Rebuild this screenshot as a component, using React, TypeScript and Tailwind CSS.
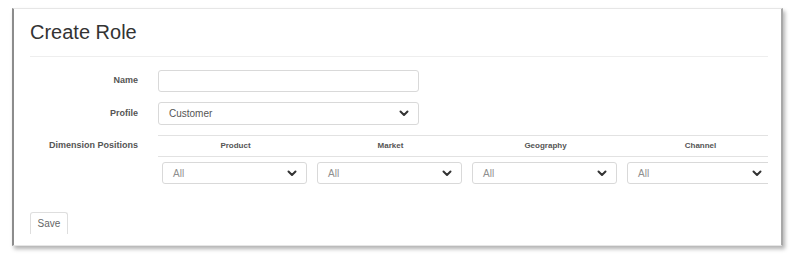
import React from 'react'

const font = "font-['Liberation_Sans',Arial,sans-serif]"

function Chevron() {
  return (
    <svg width="10" height="7" viewBox="0 0 10 7" className="shrink-0">
      <polyline points="1.5,1.5 5,5 8.5,1.5" fill="none" stroke="#333" strokeWidth="2" strokeLinecap="round" strokeLinejoin="round" />
    </svg>
  )
}

function SelectBox({ value, width, muted }: { value: string; width: string; muted?: boolean }) {
  return (
    <div
      className={`${width} h-[22px] flex items-center justify-between pl-[10px] pr-[9px] border border-[#d9d9d9] rounded-[3px] bg-white`}
    >
      <span className={`text-[10px] ${muted ? 'text-[#8f8f8f]' : 'text-[#555]'}`}>{value}</span>
      <Chevron />
    </div>
  )
}

const columns = ['Product', 'Market', 'Geography', 'Channel']

export default function App() {
  return (
    <div className={`w-[793px] h-[262px] bg-white pt-[8px] pl-[12px] ${font}`}>
      <div className="w-[771px] h-[238px] bg-white border border-[#e6e6e6] border-l-2 border-l-[#8c8c8c] border-r-2 border-r-[#a8a8a8] shadow-[2px_3px_4px_rgba(0,0,0,0.3)] pl-[16px] pr-[13px] pt-[11px] overflow-hidden">
        <h1 className="text-[20px] leading-[24px] text-[#333]">Create Role</h1>
        <div className="mt-[12px] border-t border-[#eeeeee]" />

        <div className="mt-[13px] flex items-center gap-[20px]">
          <label className="w-[108px] text-right text-[9px] font-bold text-[#555]">Name</label>
          <div className="w-[261px] h-[22px] border border-[#d9d9d9] rounded-[3px]" />
        </div>

        <div className="mt-[10px] flex items-center gap-[20px]">
          <label className="w-[108px] text-right text-[9px] font-bold text-[#555]">Profile</label>
          <SelectBox value="Customer" width="w-[261px] !h-[23px]" />
        </div>

        <div className="mt-[10px] flex items-start gap-[20px]">
          <label className="w-[108px] h-[22px] flex items-center justify-end text-[9px] font-bold text-[#555]">
            Dimension Positions
          </label>
          <div className="w-[610px] overflow-hidden">
            <div className="flex w-[620px] h-[22px] border-y border-[#e2e2e2]">
              {columns.map((c) => (
                <div key={c} className="w-[155px] shrink-0 flex items-center justify-center text-[8px] font-bold text-[#555]">
                  {c}
                </div>
              ))}
            </div>
            <div className="flex w-[620px] pt-[5px]">
              {columns.map((c) => (
                <div key={c} className="w-[155px] shrink-0 pl-[4px]">
                  <SelectBox value="All" width="w-[145px]" muted />
                </div>
              ))}
            </div>
          </div>
        </div>

        <button className="mt-[28px] w-[38px] h-[22px] flex items-center justify-center border-t border-x border-[#dedede] rounded-t-[3px] text-[10px] text-[#666]">
          Save
        </button>
      </div>
    </div>
  )
}
